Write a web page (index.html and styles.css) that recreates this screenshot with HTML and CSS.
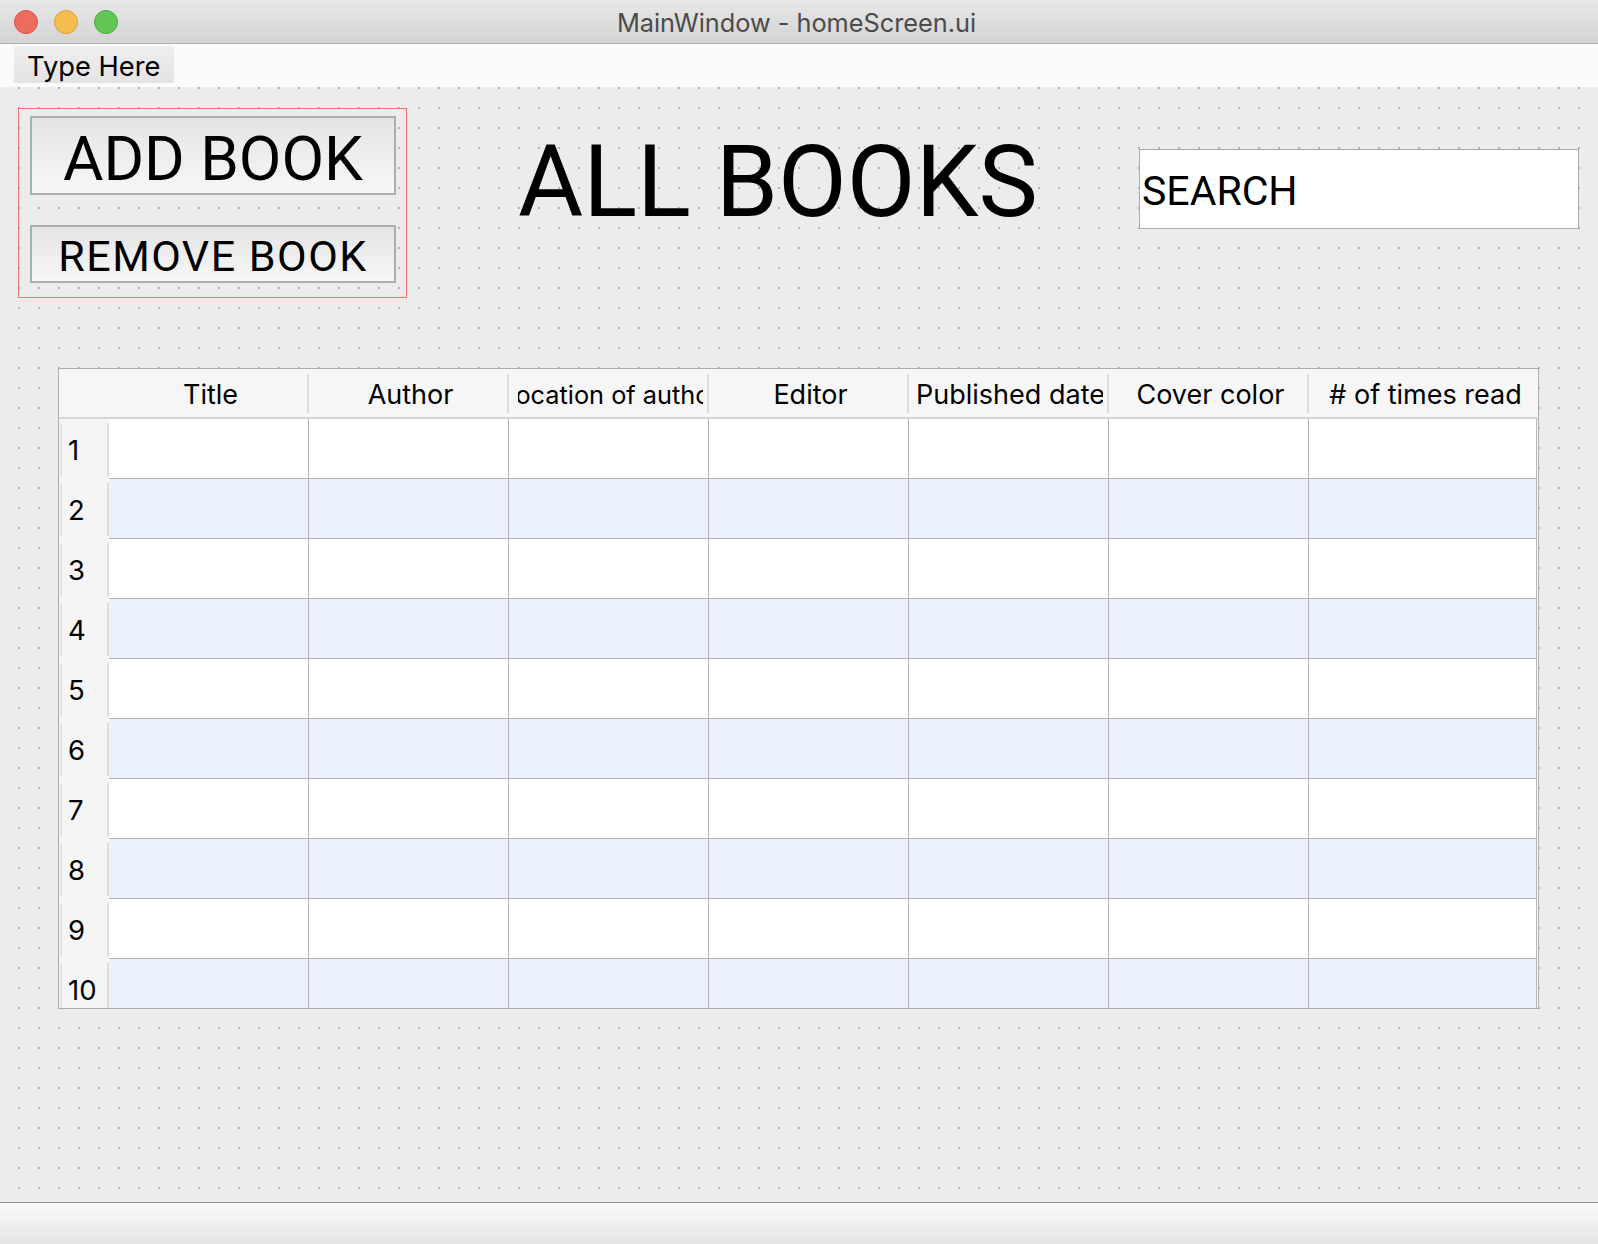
FILE: index.html
```html
<!DOCTYPE html>
<html lang="en">
<head>
<meta charset="utf-8">
<title>MainWindow - homeScreen.ui</title>
<link rel="stylesheet" href="styles.css">
</head>
<body>
<div class="window">
  <div class="titlebar">
    <div class="lights">
      <span class="light red"></span>
      <span class="light yellow"></span>
      <span class="light green"></span>
    </div>
    <div class="title">MainWindow - homeScreen.ui</div>
    <div class="spacer"></div>
  </div>
  <div class="menubar">
    <div class="menu-item">Type Here</div>
  </div>
  <div class="central">
    <div class="top-row">
      <div class="btn-group">
        <div class="btn btn-add">ADD BOOK</div>
        <div class="btn btn-remove">REMOVE BOOK</div>
      </div>
      <h1 class="heading">ALL BOOKS</h1>
      <div class="search">SEARCH</div>
    </div>
    <div class="table">
      <div class="thead">
        <div class="corner"></div>
        <div class="th"><div class="th-label"><div class="th-clip"><span>Title</span></div></div></div>
        <div class="th"><div class="th-label"><div class="th-clip"><span>Author</span></div></div></div>
        <div class="th"><div class="th-label"><div class="th-clip th-small"><span>Location of author</span></div></div></div>
        <div class="th"><div class="th-label"><div class="th-clip"><span>Editor</span></div></div></div>
        <div class="th"><div class="th-label"><div class="th-clip"><span>Published date</span></div></div></div>
        <div class="th"><div class="th-label"><div class="th-clip"><span>Cover color</span></div></div></div>
        <div class="th th-last"><div class="th-label"><div class="th-clip"><span># of times read</span></div></div></div>
      </div>
      <div class="row"><div class="rh"><div class="rh-label">1</div></div><div class="td"></div><div class="td"></div><div class="td"></div><div class="td"></div><div class="td"></div><div class="td"></div><div class="td td-last"></div></div>
      <div class="row alt"><div class="rh"><div class="rh-label">2</div></div><div class="td"></div><div class="td"></div><div class="td"></div><div class="td"></div><div class="td"></div><div class="td"></div><div class="td td-last"></div></div>
      <div class="row"><div class="rh"><div class="rh-label">3</div></div><div class="td"></div><div class="td"></div><div class="td"></div><div class="td"></div><div class="td"></div><div class="td"></div><div class="td td-last"></div></div>
      <div class="row alt"><div class="rh"><div class="rh-label">4</div></div><div class="td"></div><div class="td"></div><div class="td"></div><div class="td"></div><div class="td"></div><div class="td"></div><div class="td td-last"></div></div>
      <div class="row"><div class="rh"><div class="rh-label">5</div></div><div class="td"></div><div class="td"></div><div class="td"></div><div class="td"></div><div class="td"></div><div class="td"></div><div class="td td-last"></div></div>
      <div class="row alt"><div class="rh"><div class="rh-label">6</div></div><div class="td"></div><div class="td"></div><div class="td"></div><div class="td"></div><div class="td"></div><div class="td"></div><div class="td td-last"></div></div>
      <div class="row"><div class="rh"><div class="rh-label">7</div></div><div class="td"></div><div class="td"></div><div class="td"></div><div class="td"></div><div class="td"></div><div class="td"></div><div class="td td-last"></div></div>
      <div class="row alt"><div class="rh"><div class="rh-label">8</div></div><div class="td"></div><div class="td"></div><div class="td"></div><div class="td"></div><div class="td"></div><div class="td"></div><div class="td td-last"></div></div>
      <div class="row"><div class="rh"><div class="rh-label">9</div></div><div class="td"></div><div class="td"></div><div class="td"></div><div class="td"></div><div class="td"></div><div class="td"></div><div class="td td-last"></div></div>
      <div class="row alt"><div class="rh"><div class="rh-label">10</div></div><div class="td"></div><div class="td"></div><div class="td"></div><div class="td"></div><div class="td"></div><div class="td"></div><div class="td td-last"></div></div>
    </div>
  </div>
  <div class="statusbar"></div>
</div>
</body>
</html>
```

FILE: styles.css
```css
* { box-sizing: border-box; }

html, body {
  margin: 0;
  padding: 0;
  background: #ececec;
}

body {
  font-family: Inter, "Noto Sans", sans-serif;
  color: #000;
}

.window {
  width: 1598px;
  height: 1244px;
  display: flex;
  flex-direction: column;
  overflow: hidden;
}

/* ---------- title bar ---------- */
.titlebar {
  height: 44px;
  flex: none;
  display: grid;
  grid-template-columns: 1fr auto 1fr;
  align-items: center;
  background: linear-gradient(#e8e8e8, #d3d3d3);
  border-bottom: 1px solid #b0b0b0;
}

.lights {
  display: flex;
  gap: 16px;
  padding-left: 14px;
}

.light {
  width: 24px;
  height: 24px;
  border-radius: 50%;
  display: block;
}
.light.red { background: #ee6b60; border: 1px solid #d5554b; }
.light.yellow { background: #f6be4f; border: 1px solid #d9a13d; }
.light.green { background: #62c655; border: 1px solid #4fa83f; }

.title {
  font-size: 25.3px;
  color: #4b4b4b;
  white-space: nowrap;
  padding-top: 1px;
  margin-right: 5px;
}

/* ---------- menu bar ---------- */
.menubar {
  height: 43px;
  flex: none;
  background: #fafafa;
  padding: 2px 0 0 14px;
}

.menu-item {
  display: inline-block;
  height: 37px;
  line-height: 37px;
  padding: 2px 13px 0;
  font-size: 27.3px;
  background: linear-gradient(#efefef, #e3e3e3);
}

/* ---------- central widget ---------- */
.central {
  flex: 1;
  background-color: #ececec;
  background-image:
    linear-gradient(90deg, transparent 2px, #ececec 2px),
    linear-gradient(#b3b3b3 2px, #ececec 2px);
  background-size: 20px 20px;
  background-position: 18px 0;
  padding-top: 21px;
}

.top-row {
  display: flex;
  align-items: flex-start;
  padding-left: 18px;
  padding-right: 19px;
}

.btn-group {
  width: 389px;
  height: 190px;
  flex: none;
  border: 1px solid #f07373;
  padding: 7px 0 0 11px;
  display: flex;
  flex-direction: column;
  gap: 30px;
}

.btn {
  width: 366px;
  border: 2px solid #adadad;
  background: linear-gradient(#e4e4e4, #f7f7f7);
  font-family: Roboto, "Liberation Sans", sans-serif;
  display: flex;
  align-items: center;
  justify-content: center;
  white-space: nowrap;
}

.btn-add {
  height: 79px;
  font-size: 62px;
  padding-top: 6px;
}

.btn-remove {
  height: 58px;
  font-size: 43px;
  letter-spacing: 1.5px;
  padding-top: 3px;
}

.heading {
  margin: 24px 0 0 111px;
  font-family: Roboto, "Liberation Sans", sans-serif;
  font-weight: 400;
  font-size: 100px;
  line-height: 100px;
  white-space: nowrap;
}

.search {
  margin: 41px 0 0 auto;
  width: 440px;
  height: 80px;
  flex: none;
  background: #fff;
  border: 1px solid #ababab;
  display: flex;
  align-items: center;
  padding: 4px 0 0 2px;
  font-family: Roboto, "Liberation Sans", sans-serif;
  font-size: 41px;
}

/* ---------- table ---------- */
.table {
  margin: 70px 0 0 58px;
  width: 1481px;
  height: 641px;
  border: 1px solid #acacac;
  background: #fff;
  overflow: hidden;
}

.thead {
  display: flex;
  height: 50px;
  background: #f6f6f6;
  border-bottom: 2px solid #d5d5d5;
}

.corner {
  width: 50px;
  flex: none;
}

.th {
  width: 200px;
  flex: none;
  padding: 5px 0 4px;
}

.th-last {
  width: 228px;
}

.th-label {
  height: 100%;
  border-right: 2px solid #dcdcdc;
  display: flex;
  padding-top: 1px;
}

.th-last .th-label {
  border-right: none;
}

.th-clip {
  flex: 1;
  margin: 0 4px 0 9px;
  display: flex;
  align-items: center;
  justify-content: center;
  overflow: hidden;
  font-size: 27px;
  white-space: nowrap;
}

.th-clip.th-small {
  font-size: 25.3px;
}

.th-clip span {
  flex: none;
}

.row {
  display: flex;
  height: 60px;
  flex: none;
}

.rh {
  width: 50px;
  height: 60px;
  flex: none;
  background: #f5f5f5;
  padding: 4px 0 3px 1px;
}

.rh-label {
  height: 100%;
  border-left: 2px solid #e2e2e2;
  border-right: 2px solid #dcdcdc;
  display: flex;
  align-items: center;
  padding: 1px 0 0 6px;
  font-size: 27.5px;
}

.td {
  width: 200px;
  height: 60px;
  flex: none;
  border-right: 1px solid #b3b3b3;
  border-bottom: 1px solid #b3b3b3;
}

.td-last {
  width: 228px;
}

.row.alt .td {
  background: #eaf1fc;
}

/* ---------- status bar ---------- */
.statusbar {
  height: 42px;
  flex: none;
  border-top: 1px solid #8e8e8e;
  background: linear-gradient(#fbfbfb, #e4e4e4);
}
```
